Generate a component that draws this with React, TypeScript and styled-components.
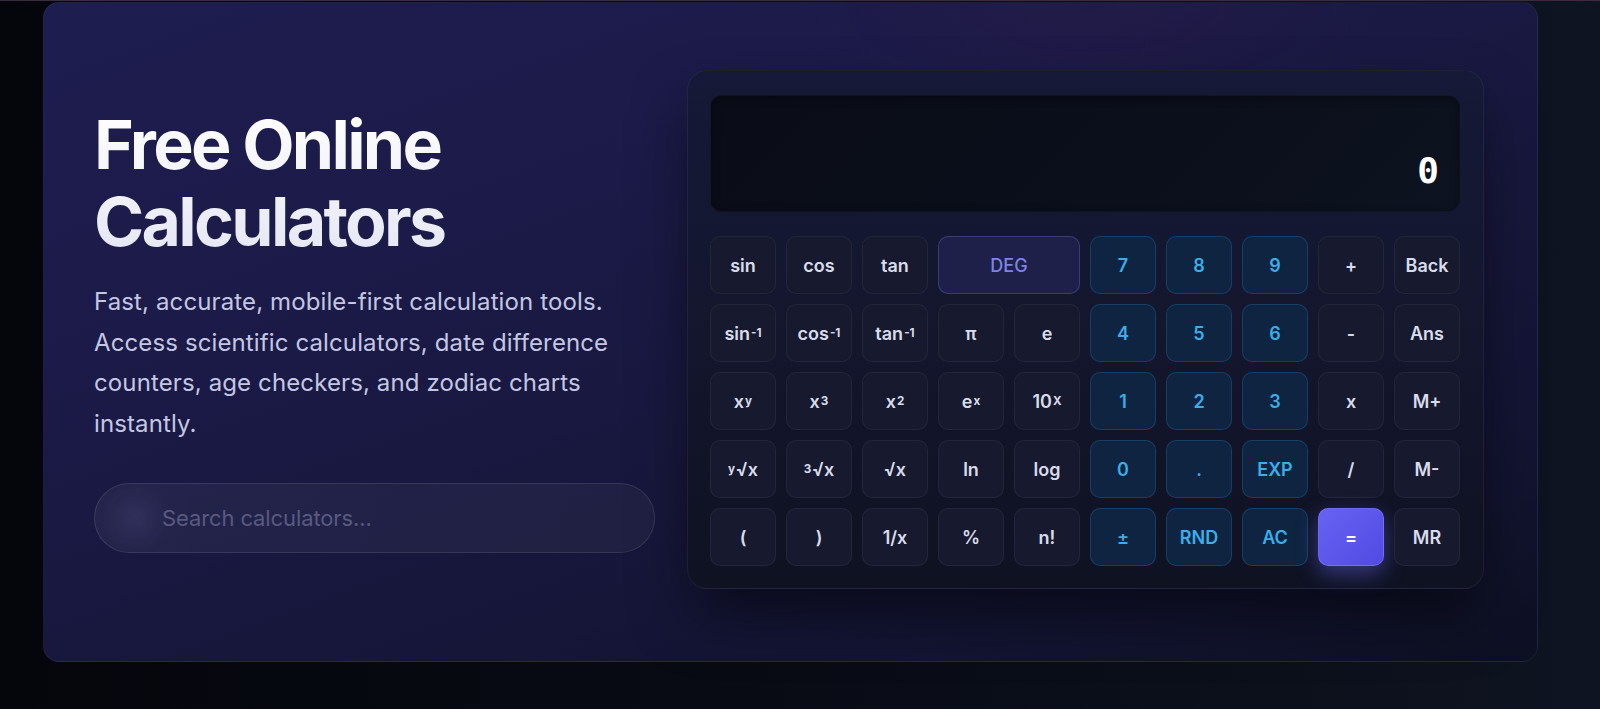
import React from "react";
import styled, { createGlobalStyle, css } from "styled-components";

const GlobalStyle = createGlobalStyle`
  html, body {
    margin: 0;
    padding: 0;
    background: #07090f;
    overflow: hidden;
  }
  * { box-sizing: border-box; }
  #root { height: 709px; }
`;

const Page = styled.div`
  height: 709px;
  border-top: 1px solid #3a2c3e;
  background: linear-gradient(90deg, #05060c 0%, #080b14 45%, #0c101b 80%, #0f1422 100%);
  padding: 1px 0 0 43px;
  font-family: Inter, "Noto Sans", sans-serif;
`;

const Card = styled.section`
  width: 1495px;
  border-radius: 16px;
  border: 1px solid rgba(255, 255, 255, 0.05);
  background:
    radial-gradient(ellipse 420px 160px at 70% 0%, rgba(90, 30, 70, 0.1), transparent 70%),
    linear-gradient(160deg, #1e1d50 0%, #1b1a47 35%, #17173c 60%, #121430 85%, #0d1022 100%);
  padding: 67px 53px 72px 50px;
  display: grid;
  grid-template-columns: 561px 797px;
  column-gap: 32px;
  align-items: center;
`;

const Intro = styled.div`
  display: flex;
  flex-direction: column;
`;

const Heading = styled.h1`
  margin: 0;
  font-size: 68px;
  line-height: 77px;
  font-weight: 700;
  letter-spacing: -0.04em;
  background: linear-gradient(180deg, #ffffff 0%, #e4e6f3 100%);
  -webkit-background-clip: text;
  background-clip: text;
  color: transparent;
`;

const Lead = styled.p`
  margin: 22px 0 0;
  font-size: 24px;
  line-height: 40.5px;
  font-weight: 400;
  letter-spacing: 0.005em;
  color: #c4c7e2;
`;

const Search = styled.div`
  margin-top: 39px;
  height: 70px;
  border-radius: 999px;
  border: 1px solid rgba(255, 255, 255, 0.1);
  background:
    radial-gradient(circle 34px at 40px 50%, rgba(120, 120, 190, 0.14), transparent 100%),
    linear-gradient(90deg, rgba(255, 255, 255, 0.05), rgba(255, 255, 255, 0.04));
  display: flex;
  align-items: center;
  padding-left: 65px;
`;

const SearchInput = styled.input`
  flex: 1;
  background: transparent;
  border: none;
  outline: none;
  font-family: Inter, "Noto Sans", sans-serif;
  font-size: 22px;
  letter-spacing: -0.005em;
  color: #c4c7e2;
  &::placeholder { color: #585a80; }
`;

const Panel = styled.div`
  border-radius: 20px;
  border: 1px solid rgba(255, 255, 255, 0.06);
  background: linear-gradient(180deg, #161937 0%, #13162c 55%, #0f1221 100%);
  box-shadow: 0 30px 60px -8px rgba(0, 0, 0, 0.55);
  padding: 24px 23px 22px 22px;
  display: flex;
  flex-direction: column;
  gap: 24px;
`;

const Display = styled.div`
  height: 117px;
  border-radius: 12px;
  border: 1px solid rgba(255, 255, 255, 0.025);
  background: linear-gradient(135deg, #0a0d18 0%, #0b0f1b 60%, #0d1320 100%);
  box-shadow: inset 0 2px 8px rgba(0, 0, 0, 0.4);
  display: flex;
  flex-direction: column;
  justify-content: flex-end;
  align-items: flex-end;
  padding: 0 20px 22px;
`;

const Value = styled.div`
  font-family: "DejaVu Sans Mono", "Liberation Mono", monospace;
  font-weight: 700;
  font-size: 36px;
  line-height: 36px;
  color: #ffffff;
`;

const Keys = styled.div`
  display: grid;
  grid-template-columns: repeat(10, 1fr);
  grid-auto-rows: 58px;
  gap: 10px;
`;

type Variant = "fn" | "num" | "mode" | "eq";

const variants = {
  fn: css`
    background: #171a2e;
    border-color: rgba(255, 255, 255, 0.055);
    color: #d9dcec;
  `,
  num: css`
    background: #0e2440;
    border-color: rgba(56, 160, 230, 0.22);
    color: #3cade9;
  `,
  mode: css`
    background: #1f2049;
    border-color: rgba(129, 134, 248, 0.28);
    color: #7e83ea;
    font-weight: 500;
  `,
  eq: css`
    background: linear-gradient(135deg, #6763f2 0%, #524ae4 100%);
    border-color: rgba(140, 140, 255, 0.4);
    color: #ffffff;
    box-shadow: 0 8px 22px rgba(99, 102, 241, 0.45);
  `,
};

const Key = styled.button<{ $variant: Variant; $span?: number }>`
  grid-column: span ${(p) => p.$span ?? 1};
  border: 1px solid transparent;
  border-radius: 10px;
  font-family: Inter, "Noto Sans", sans-serif;
  font-size: 18px;
  font-weight: 600;
  letter-spacing: 0;
  display: flex;
  align-items: center;
  justify-content: center;
  padding: 0;
  cursor: pointer;
  ${(p) => variants[p.$variant]}
`;

const Sup = styled.sup`
  font-size: 0.65em;
  font-weight: 700;
  line-height: 0;
  vertical-align: 0.5em;
  margin-left: 1px;
`;

const Pre = styled.sup`
  font-size: 0.65em;
  font-weight: 700;
  line-height: 0;
  vertical-align: 0.45em;
  margin-right: 1px;
`;

type K = { label: React.ReactNode; v: Variant; span?: number };

const keys: K[] = [
  { label: "sin", v: "fn" },
  { label: "cos", v: "fn" },
  { label: "tan", v: "fn" },
  { label: "DEG", v: "mode", span: 2 },
  { label: "7", v: "num" },
  { label: "8", v: "num" },
  { label: "9", v: "num" },
  { label: "+", v: "fn" },
  { label: "Back", v: "fn" },

  { label: <>sin<Sup>-1</Sup></>, v: "fn" },
  { label: <>cos<Sup>-1</Sup></>, v: "fn" },
  { label: <>tan<Sup>-1</Sup></>, v: "fn" },
  { label: "π", v: "fn" },
  { label: "e", v: "fn" },
  { label: "4", v: "num" },
  { label: "5", v: "num" },
  { label: "6", v: "num" },
  { label: "-", v: "fn" },
  { label: "Ans", v: "fn" },

  { label: <>x<Sup>y</Sup></>, v: "fn" },
  { label: <>x<Sup>3</Sup></>, v: "fn" },
  { label: <>x<Sup>2</Sup></>, v: "fn" },
  { label: <>e<Sup>x</Sup></>, v: "fn" },
  { label: <>10<Sup>X</Sup></>, v: "fn" },
  { label: "1", v: "num" },
  { label: "2", v: "num" },
  { label: "3", v: "num" },
  { label: "x", v: "fn" },
  { label: "M+", v: "fn" },

  { label: <><Pre>y</Pre>√x</>, v: "fn" },
  { label: <><Pre>3</Pre>√x</>, v: "fn" },
  { label: "√x", v: "fn" },
  { label: "ln", v: "fn" },
  { label: "log", v: "fn" },
  { label: "0", v: "num" },
  { label: ".", v: "num" },
  { label: "EXP", v: "num" },
  { label: "/", v: "fn" },
  { label: "M-", v: "fn" },

  { label: "(", v: "fn" },
  { label: ")", v: "fn" },
  { label: "1/x", v: "fn" },
  { label: "%", v: "fn" },
  { label: "n!", v: "fn" },
  { label: "±", v: "num" },
  { label: "RND", v: "num" },
  { label: "AC", v: "num" },
  { label: "=", v: "eq" },
  { label: "MR", v: "fn" },
];

export default function App() {
  return (
    <>
      <GlobalStyle />
      <Page>
        <Card>
          <Intro>
            <Heading>
              Free Online
              <br />
              Calculators
            </Heading>
            <Lead>
              Fast, accurate, mobile-first calculation tools.
              <br />
              Access scientific calculators, date difference
              <br />
              counters, age checkers, and zodiac charts
              <br />
              instantly.
            </Lead>
            <Search>
              <SearchInput placeholder="Search calculators..." />
            </Search>
          </Intro>
          <Panel>
            <Display>
              <Value>0</Value>
            </Display>
            <Keys>
              {keys.map((k, i) => (
                <Key key={i} $variant={k.v} $span={k.span}>
                  {k.label}
                </Key>
              ))}
            </Keys>
          </Panel>
        </Card>
      </Page>
    </>
  );
}
